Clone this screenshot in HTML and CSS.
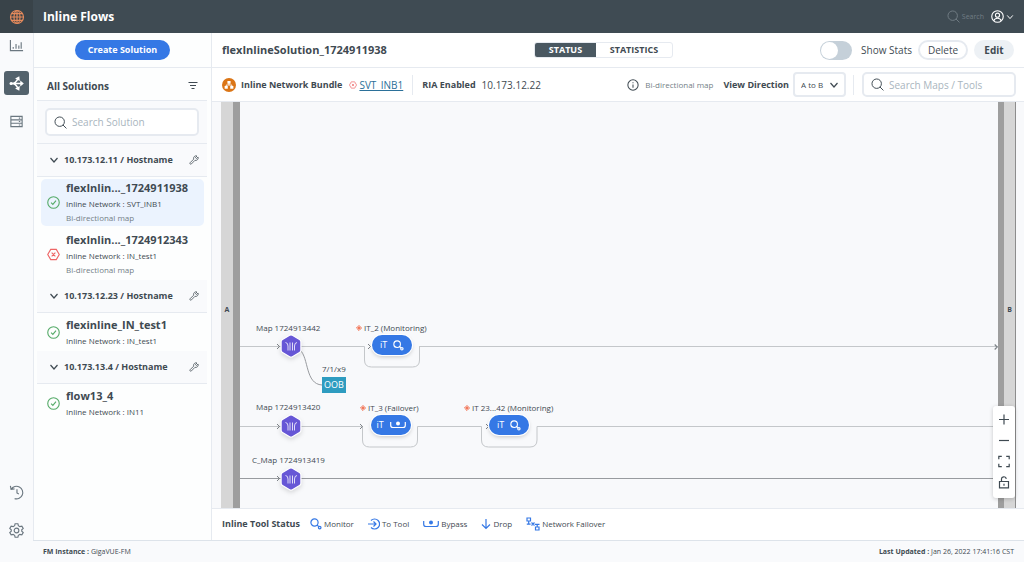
FILE: index.html
```html
<!DOCTYPE html>
<html lang="en">
<head>
<meta charset="UTF-8" />
<meta name="viewport" content="width=device-width, initial-scale=1" />
<title>Inline Flows</title>
<link rel="stylesheet" href="styles.css">
</head>
<body>
<!-- shared icons -->
<svg class="sprite" aria-hidden="true">
  <symbol id="i-search" viewBox="0 0 16 16"><circle cx="7" cy="7" r="5.8"/><path d="M11 11l4.300 4.300"/></symbol>
  <symbol id="i-chevron" viewBox="0 0 10 10"><path d="M1.500 3l3.500 4 3.500-4"/></symbol>
  <symbol id="i-wrench" viewBox="0 0 16 16"><path d="M12.800 1.600a4 4 0 0 0-5.300 5L1.800 12.300a1.400 1.400 0 0 0 2 2l5.700-5.800a4 4 0 0 0 5-5.200l-2.600 2.300-1.600-1.500z"/></symbol>
  <symbol id="i-ok" viewBox="0 0 14 14"><circle cx="7" cy="7" r="6.200"/><path d="M4.400 7.200l1.900 1.900 3.400-4"/></symbol>
  <symbol id="i-error" viewBox="0 0 14 14"><path d="M4 1.500h6L13.200 7 10 12.500H4L.8 7z"/><path d="M5 5l4 4M9 5l-4 4"/></symbol>
  <symbol id="i-monitor" viewBox="0 0 12 12"><circle cx="4.500" cy="4.500" r="3.600"/><path d="M7 7l1.800 1.600"/><circle cx="9.700" cy="9.600" r="1.300"/></symbol>
  <symbol id="i-bypass" viewBox="0 0 16 10"><path d="M.7 2v3.200a2.300 2.300 0 0 0 2.300 2.300h10a2.300 2.300 0 0 0 2.300-2.300V2"/><circle class="dot" cx="8" cy="3.600" r="2"/></symbol>
  <symbol id="i-hex" viewBox="0 0 22 24"><path class="hex" d="M9.600 1.300q1.400-.8 2.800 0l7.100 4.100q1.400.8 1.400 2.400v8.400q0 1.600-1.400 2.400l-7.100 4.100q-1.400.8-2.800 0L2.500 18.600q-1.400-.8-1.400-2.400V7.800q0-1.600 1.400-2.400z"/><path class="mark" d="M5.500 8.500q2.500.3 2.500 3.500v4.500M10 8.500v8M12.500 8.500v8M17 8.500q-2.500.3-2.500 3.500v4.500"/></symbol>
  <symbol id="i-flag" viewBox="0 0 8 8"><path d="M4 .7L7.300 4 4 7.300.7 4z"/><path d="M2.800 2.800l2.400 2.400M5.200 2.800L2.800 5.200"/></symbol>
</svg>

<div class="app">
  <header class="topbar">
    <a class="brand" href="#" aria-label="Home">
      <svg viewBox="0 0 16 16"><circle cx="8" cy="8" r="6.500"/><ellipse cx="8" cy="8" rx="3" ry="6.500"/><path d="M8 1.500v13M1.500 8h13M2.600 4.700h10.800M2.600 11.300h10.800"/></svg>
    </a>
    <h1>Inline Flows</h1>
    <button class="top-search"><svg><use href="#i-search"/></svg>Search</button>
    <button class="account" aria-label="Account">
      <svg class="avatar" viewBox="0 0 14 14"><circle cx="7" cy="7" r="6.200"/><circle cx="7" cy="5.600" r="2.200"/><path d="M3 11.500q1-2.600 4-2.600t4 2.600"/></svg>
      <svg class="chev"><use href="#i-chevron"/></svg>
    </button>
  </header>

  <nav class="rail" aria-label="Main">
    <a href="#" aria-label="Dashboard"><svg viewBox="0 0 16 16"><path d="M1.500 2v11.500H15M4.500 9.500v2M7.500 6.500v5M10.500 8v3.500M13 4.500v7"/></svg></a>
    <a href="#" class="active" aria-label="Inline Flows"><svg viewBox="0 0 16 16"><path class="thick" d="M1 8h12.500M3 8q4 0 6.500-5M3 8q4 0 6.500 5"/><path class="fill" d="M12 4.800L15.800 8 12 11.200zM6.500 2.600L11 .3l.5 5zM6.500 13.400l4.500 2.300.5-5z"/><circle class="fill" cx="2.300" cy="8" r="1.700"/></svg></a>
    <a href="#" aria-label="Inventory"><svg viewBox="0 0 16 16"><path d="M2 2.500h12v11H2zM2 6.200h12M2 9.800h12M10.500 4.400H12M10.500 8H12M10.500 11.700H12"/></svg></a>
    <a href="#" class="history" aria-label="History"><svg viewBox="0 0 16 16"><path d="M2.300 4.500A6.700 6.700 0 1 1 6 14.500M1.500 1l.7 3.700 3.700-.6M8.500 4.500v4l2 1"/></svg></a>
    <a href="#" aria-label="Settings"><svg viewBox="0 0 16 16"><path d="M6.500.8h3l.5 2.100 1.600 1 2.100-.6 1.500 2.500-1.600 1.500v1.400l1.600 1.500-1.500 2.500-2.100-.6-1.600 1-.5 2.100h-3L6 13.100l-1.600-1-2.100.6-1.500-2.500 1.600-1.500V7.300L.8 5.800l1.500-2.500 2.100.6L6 2.900z"/><circle cx="8" cy="8" r="2.500"/></svg></a>
  </nav>

  <aside class="sidebar">
    <div class="create"><button class="primary">Create Solution</button></div>
    <div class="list">
      <div class="list-head">
        <h2>All Solutions</h2>
        <button aria-label="Filter"><svg viewBox="0 0 10 10"><path d="M.5 1.500h9M2 4.500h6M3.500 7.500h3"/></svg></button>
      </div>
      <div class="search-row">
        <label class="field"><svg><use href="#i-search"/></svg><input type="text" placeholder="Search Solution" aria-label="Search Solution"></label>
      </div>

      <h3 class="group"><svg class="chev"><use href="#i-chevron"/></svg>10.173.12.11 / Hostname<svg class="wrench"><use href="#i-wrench"/></svg></h3>
      <a href="#" class="item selected">
        <svg class="ok"><use href="#i-ok"/></svg>
        <span><b>flexInlin..._1724911938</b><small>Inline Network : SVT_INB1</small><small class="muted">Bi-directional map</small></span>
      </a>
      <a href="#" class="item">
        <svg class="error"><use href="#i-error"/></svg>
        <span><b>flexInlin..._1724912343</b><small>Inline Network : IN_test1</small><small class="muted">Bi-directional map</small></span>
      </a>

      <h3 class="group"><svg class="chev"><use href="#i-chevron"/></svg>10.173.12.23 / Hostname<svg class="wrench"><use href="#i-wrench"/></svg></h3>
      <a href="#" class="item">
        <svg class="ok"><use href="#i-ok"/></svg>
        <span><b>flexinline_IN_test1</b><small>Inline Network : IN_test1</small></span>
      </a>

      <h3 class="group"><svg class="chev"><use href="#i-chevron"/></svg>10.173.13.4 / Hostname<svg class="wrench"><use href="#i-wrench"/></svg></h3>
      <a href="#" class="item">
        <svg class="ok"><use href="#i-ok"/></svg>
        <span><b>flow13_4</b><small>Inline Network : IN11</small></span>
      </a>
    </div>
  </aside>

  <main class="main">
    <div class="titlebar">
      <h2>flexInlineSolution_1724911938</h2>
      <div class="tabs" role="tablist">
        <button class="active" role="tab" aria-selected="true">STATUS</button>
        <button role="tab" aria-selected="false">STATISTICS</button>
      </div>
      <div class="actions">
        <input type="checkbox" class="switch" id="showStats">
        <label for="showStats">Show Stats</label>
        <button class="pill outline">Delete</button>
        <button class="pill">Edit</button>
      </div>
    </div>

    <div class="infobar">
      <svg class="bundle" viewBox="0 0 16 16"><circle cx="8" cy="8" r="8"/><path class="white" d="M6.200 3.300h3.600v3.200H6.200zM3 9h3.600v3.200H3zM9.400 9H13v3.200H9.400z"/><path class="link" d="M8 6v2M4.800 9.500V8h6.400v1.500"/></svg>
      <b>Inline Network Bundle</b>
      <svg class="bundle-error"><use href="#i-error"/></svg>
      <a href="#">SVT_INB1</a>
      <i class="sep"></i>
      <b>RIA Enabled</b>
      <span class="ip">10.173.12.22</span>
      <svg class="info" viewBox="0 0 14 14"><circle cx="7" cy="7" r="6"/><path d="M7 6.300v4M7 3.800v1.300"/></svg>
      <span class="hint">Bi-directional map</span>
      <label class="direction" for="direction">View Direction</label>
      <span class="select">
        <select id="direction"><option>A to B</option><option>B to A</option></select>
        <svg class="chev"><use href="#i-chevron"/></svg>
      </span>
      <i class="sep short"></i>
      <label class="field"><svg><use href="#i-search"/></svg><input type="text" placeholder="Search Maps / Tools" aria-label="Search Maps / Tools"></label>
    </div>

    <div class="canvas">
      <div class="port port-a">A</div>
      <div class="stage">
        <svg class="wires" aria-hidden="true">
          <!-- map 1 -->
          <path d="M0 244.500H124.500V258q0 7 7 7H172.500q7 0 7-7V244.500"/>
          <line x1="179" y1="244.500" x2="100%" y2="244.500"/>
          <path class="dark" d="M60 248C69 256 65 282 82 283"/>
          <!-- map 2 -->
          <path d="M0 324.500H122.500V338q0 7 7 7H170.500q7 0 7-7V324.500H241.500V338q0 7 7 7H290q7 0 7-7V324.500"/>
          <line x1="297" y1="324.500" x2="100%" y2="324.500"/>
          <!-- map 3 -->
          <line class="dark" x1="0" y1="376.500" x2="100%" y2="376.500"/>
          <path class="arrow" d="M37 242l2.500 2.500L37 247M128 242l2.500 2.500L128 247M37 322l2.500 2.500L37 327M120 322l2.500 2.500L120 327M246 322l2.500 2.500L246 327M37 374l2.500 2.500L37 379"/>
        </svg>

        <span class="label map1">Map 1724913442</span>
        <svg class="hexnode map1-hex"><use href="#i-hex"/></svg>
        <span class="label oob-label">7/1/x9</span>
        <button class="oob">OOB</button>
        <span class="label tool1-label"><svg><use href="#i-flag"/></svg>IT_2 (Monitoring)</span>
        <button class="tool tool1">iT <svg><use href="#i-monitor"/></svg></button>
        <svg class="end" viewBox="0 0 4 6"><path d="M.7.500L3.200 3 .7 5.500"/></svg>

        <span class="label map2">Map 1724913420</span>
        <svg class="hexnode map2-hex"><use href="#i-hex"/></svg>
        <span class="label tool2-label"><svg><use href="#i-flag"/></svg>IT_3 (Failover)</span>
        <button class="tool tool2">iT <svg class="wide"><use href="#i-bypass"/></svg></button>
        <span class="label tool3-label"><svg><use href="#i-flag"/></svg>IT 23...42 (Monitoring)</span>
        <button class="tool tool3">iT <svg><use href="#i-monitor"/></svg></button>

        <span class="label map3">C_Map 1724913419</span>
        <svg class="hexnode map3-hex"><use href="#i-hex"/></svg>
      </div>
      <div class="port port-b">B</div>

      <div class="zoom">
        <button aria-label="Zoom in"><svg viewBox="0 0 12 12"><path d="M6 1v10M1 6h10"/></svg></button>
        <button aria-label="Zoom out"><svg viewBox="0 0 12 12"><path d="M1 6h10"/></svg></button>
        <button aria-label="Fit view"><svg viewBox="0 0 12 12"><path d="M.8 3.800v-3h3M8.200.8h3v3M11.200 8.200v3h-3M3.800 11.200h-3v-3"/></svg></button>
        <button aria-label="Unlock"><svg viewBox="0 0 12 12"><path d="M1.500 5h9v6.300h-9zM3.500 5V3a2.400 2.400 0 0 1 4.800-.6M6 7.200v2"/></svg></button>
      </div>
    </div>

    <div class="legend">
      <b>Inline Tool Status</b>
      <span><svg><use href="#i-monitor"/></svg>Monitor</span>
      <span><svg viewBox="0 0 12 12"><path d="M3 2.500a5 5 0 1 1 0 7M0 6h8M5.500 3.500L8 6 5.500 8.500"/></svg>To Tool</span>
      <span><svg class="wide"><use href="#i-bypass"/></svg>Bypass</span>
      <span><svg class="slim" viewBox="0 0 10 12"><path d="M5 1v9.500M1 6.500l4 4 4-4"/></svg>Drop</span>
      <span><svg class="failover" viewBox="0 0 14 14"><path d="M1 1h3.500v3H1zM2.700 4v3M.8 7.200h3.800M9.500 10H13v3H9.500zM11.200 7.500V10M9 7.300h4.500M5.500 5.500l3 3M8.500 5.500l-3 3"/></svg>Network Failover</span>
    </div>
  </main>

  <footer class="footer">
    <span><b>FM Instance :</b> GigaVUE-FM</span>
    <span><b>Last Updated :</b> Jan 26, 2022 17:41:16 CST</span>
  </footer>
</div>
</body>
</html>
```
FILE: styles.css
```css
*, *::before, *::after {
  box-sizing: border-box;
}
body {
  --ink: #3f4a52;
  --line: #e6eaf0;
  --soft: #f9fafc;
  --blue: #3578e5;
  margin: 0;
  font-family: "Open Sans", "Noto Sans", sans-serif;
  font-size: 9px;
  line-height: 12px;
  color: var(--ink);
  background: var(--soft);
}
h1, h2, h3 {
  margin: 0;
}
button, input, select {
  font: inherit;
  color: inherit;
  border: 0;
  padding: 0;
  background: none;
}
button {
  cursor: pointer;
}
a {
  color: inherit;
  text-decoration: none;
}
svg {
  display: block;
  flex: none;
  fill: none;
  stroke: currentColor;
  stroke-width: 1.2;
}
.sprite {
  position: absolute;
  width: 0;
  height: 0;
}
.chev {
  width: 10px;
  height: 10px;
}

/* page frame */
.app {
  display: grid;
  grid-template: 33px 1fr 22px / 33px 179px 1fr;
  height: 100vh;
}

/* top bar */
.topbar {
  grid-column: 1 / -1;
  display: flex;
  align-items: center;
  padding-right: 10px;
  background: #3f4b53;
  color: #fff;
}
.brand {
  display: grid;
  place-items: center;
  width: 33px;
  height: 33px;
  background: #394349;
  color: #e58a5c;
}
.brand svg {
  width: 16px;
  height: 16px;
}
.topbar h1 {
  margin-left: 10px;
  font-size: 12px;
}
.top-search {
  display: flex;
  align-items: center;
  gap: 2px;
  margin-left: auto;
  font-size: 7px;
  color: #717c84;
}
.top-search svg {
  width: 13px;
  height: 13px;
}
.account {
  display: flex;
  align-items: center;
  gap: 2px;
  margin-left: 7px;
}
.avatar {
  width: 13px;
  height: 13px;
}
.account .chev {
  width: 8px;
  height: 8px;
}

/* icon rail */
.rail {
  grid-row: 2 / 4;
  display: flex;
  flex-direction: column;
  align-items: center;
  gap: 14px;
  padding-bottom: 20px;
  color: #6b7780;
}
.rail a {
  display: grid;
  place-items: center;
  width: 25px;
  height: 24px;
  border-radius: 3px;
}
.rail svg {
  width: 15px;
  height: 15px;
}
.rail .active {
  background: #53626c;
  color: #fff;
}
.rail .thick {
  stroke-width: 1.6;
}
.rail .fill {
  fill: currentColor;
  stroke: none;
}
.rail .history {
  margin-top: auto;
}

/* sidebar */
.sidebar {
  background: #fdfefe;
  border: solid var(--line);
  border-width: 0 1px;
}
.create {
  display: grid;
  place-items: center;
  height: 35px;
  border-bottom: 1px solid var(--line);
}
.primary {
  width: 95px;
  height: 20px;
  border-radius: 10px;
  background: var(--blue);
  color: #fff;
  font-weight: 700;
}
.list {
  padding: 0 4px 0 3px;
}
.list-head {
  display: flex;
  align-items: center;
  justify-content: space-between;
  height: 33px;
  padding: 4px 9px 0 10px;
  border-bottom: 1px solid var(--line);
}
.list-head h2 {
  font-size: 10px;
}
.list-head svg {
  width: 10px;
  height: 10px;
}
.search-row {
  padding: 7px 8px;
  background: var(--soft);
  border-bottom: 1px solid var(--line);
}
.field {
  display: flex;
  align-items: center;
  gap: 5px;
  height: 28px;
  padding: 0 7px;
  background: #fff;
  border: 2px solid var(--line);
  border-radius: 5px;
}
.field svg {
  width: 13px;
  height: 13px;
}
.field input {
  flex: 1;
  min-width: 0;
  font-size: 10px;
  outline: none;
}
.field input::placeholder {
  color: #a9b5be;
}
.group {
  display: flex;
  align-items: center;
  gap: 5px;
  height: 33px;
  padding: 0 8px 0 12px;
  font-size: 9px;
  background: var(--soft);
  border-bottom: 1px solid var(--line);
}
.wrench {
  width: 10px;
  height: 10px;
  margin-left: auto;
}
.item {
  display: flex;
  align-items: center;
  gap: 6px;
  margin: 0 4px;
  padding: 3px 6px;
  border-radius: 5px;
}
.item.selected {
  margin: 2px 3px 2px 4px;
  padding: 0 6px 1px;
  background: #ebf3fe;
}
.item svg {
  width: 13px;
  height: 13px;
}
.item b, .item small {
  display: block;
}
.item b {
  font-size: 11px;
  line-height: 18px;
}
.item small {
  font-size: 8px;
  line-height: 14px;
}
.item .muted {
  color: #747f87;
}
.ok {
  color: #56ab69;
}
.error, .bundle-error {
  color: #ee6666;
}

/* title bar */
.main {
  display: flex;
  flex-direction: column;
  min-width: 0;
  background: #fff;
}
.titlebar {
  display: flex;
  justify-content: space-between;
  align-items: center;
  height: 35px;
  padding: 0 10px;
  border-bottom: 1px solid var(--line);
}
.titlebar h2 {
  font-size: 11px;
}
.tabs {
  display: flex;
  height: 16px;
  border: 1px solid var(--line);
  border-radius: 3px;
  overflow: hidden;
}
.tabs button {
  width: 76px;
  line-height: 14px;
  font-weight: 700;
}
.tabs .active {
  width: 61px;
  background: #4a5861;
  color: #fff;
}
.actions {
  display: flex;
  align-items: center;
  gap: 6px;
}
.actions label {
  font-size: 10px;
}
.switch {
  appearance: none;
  width: 32px;
  height: 19px;
  margin: 0 3px 0 0;
  padding: 1px;
  border-radius: 10px;
  background: #c5d0d9;
}
.switch::before {
  content: "";
  display: block;
  width: 17px;
  height: 17px;
  border-radius: 50%;
  background: #fff;
}
.switch:checked::before {
  margin-left: auto;
}
.pill {
  width: 40px;
  height: 20px;
  border-radius: 10px;
  background: #edf1f5;
  font-size: 10px;
  font-weight: 700;
}
.pill.outline {
  width: 50px;
  background: #fff;
  border: 2px solid var(--line);
  font-weight: 400;
}

/* info bar */
.infobar {
  display: flex;
  align-items: center;
  height: 34px;
  padding: 0 8px 0 10px;
  border-bottom: 1px solid var(--line);
}
.bundle {
  width: 14px;
  height: 14px;
  margin-right: 5px;
}
.bundle circle {
  fill: #db7516;
  stroke: none;
}
.bundle .white {
  fill: #fff;
  stroke: none;
}
.bundle .link {
  stroke: #fff;
  stroke-width: 1;
}
.bundle-error {
  width: 8px;
  height: 8px;
  margin: 0 2px 0 7px;
}
.infobar a {
  font-size: 10px;
  color: #2b7099;
  text-decoration: underline;
}
.sep {
  height: 20px;
  margin: 0 9px;
  border-left: 1px solid var(--line);
}
.ip {
  margin-left: 6px;
  font-size: 10px;
}
.info {
  width: 12px;
  height: 12px;
  margin: 0 6px 0 auto;
}
.hint {
  font-size: 8px;
  color: #747f87;
}
.direction {
  margin: 0 4px 0 10px;
  font-weight: 700;
}
.select {
  position: relative;
}
.select select {
  appearance: none;
  display: block;
  width: 53px;
  height: 25px;
  padding: 0 6px;
  font-size: 8px;
  background: #fff;
  border: 2px solid var(--line);
  border-radius: 4px;
}
.select .chev {
  position: absolute;
  top: 8px;
  right: 7px;
  pointer-events: none;
}
.sep.short {
  margin: 0 8px 0 7px;
}
.infobar .field {
  flex: 0 0 154px;
  min-width: 0;
  width: 154px;
  height: 25px;
}
.field input {
  width: 100%;
}

/* flow canvas */
.canvas {
  position: relative;
  flex: 1;
  display: flex;
  min-height: 0;
  padding: 0 8px 0 9px;
  background: #f8f9fb;
  border-bottom: 1px solid var(--line);
}
.port {
  display: grid;
  place-items: center;
  padding-top: 10px;
  width: 19px;
  font-size: 7px;
  font-weight: 700;
  background: #d6d6d6;
}
.port-a {
  border-right: 7px solid #9e9e9e;
}
.port-b {
  width: 18px;
  border-left: 6px solid #9e9e9e;
  border-right: 1px solid #8d8d8d;
}
.stage {
  position: relative;
  flex: 1;
}
.wires {
  width: 100%;
  height: 100%;
  stroke: #c4c7ca;
  stroke-width: 1;
}
.wires .dark {
  stroke: #989b9f;
}
.wires .arrow, .end {
  stroke: #7e8388;
}
.end {
  position: absolute;
  top: 242px;
  right: 0;
  width: 4px;
  height: 6px;
}
.label {
  position: absolute;
  display: flex;
  align-items: center;
  gap: 2px;
  font-size: 8px;
  white-space: nowrap;
}
.label svg {
  width: 6px;
  height: 6px;
  color: #f05a35;
}
.hexnode {
  position: absolute;
  left: 40px;
  width: 22px;
  height: 24px;
  filter: drop-shadow(0 2px 2px #0002);
}
.hex {
  fill: #6757d6;
  stroke: #fff;
}
.mark {
  stroke: #fff;
  stroke-width: .8;
}
.tool {
  position: absolute;
  display: flex;
  align-items: center;
  justify-content: center;
  gap: 6px;
  width: 40px;
  height: 20px;
  border-radius: 10px;
  background: var(--blue);
  color: #fff;
  box-shadow: 0 0 0 1px #fff, 0 2px 4px #0003;
}
.tool svg {
  width: 11px;
  height: 11px;
}
.tool .wide, .legend .wide {
  width: 16px;
  height: 10px;
}
.dot {
  fill: currentColor;
  stroke: none;
}
.oob {
  position: absolute;
  top: 275px;
  left: 82px;
  width: 24px;
  height: 16px;
  background: #2e9cc0;
  color: #fff;
  line-height: 16px;
}

/* node positions on the canvas */
.map1 { top: 220px; left: 16px; }
.map1-hex { top: 232px; }
.oob-label { top: 261px; left: 82px; }
.tool1-label { top: 220px; left: 116px; }
.tool1 { top: 233px; left: 132px; }
.map2 { top: 299px; left: 16px; }
.map2-hex { top: 312px; }
.tool2-label { top: 300px; left: 120px; }
.tool2 { top: 313px; left: 131px; }
.tool3-label { top: 300px; left: 224px; }
.tool3 { top: 313px; left: 249px; }
.map3 { top: 352px; left: 12px; }
.map3-hex { top: 365px; }

/* zoom controls */
.zoom {
  position: absolute;
  right: 9px;
  bottom: 10px;
  display: flex;
  flex-direction: column;
  gap: 8px;
  align-items: center;
  width: 22px;
  height: 92px;
  padding: 7px 0;
  border-radius: 3px;
  background: #fff;
  box-shadow: 0 1px 4px #0003;
}
.zoom svg {
  width: 12px;
  height: 13px;
}

/* legend */
.legend {
  display: flex;
  align-items: center;
  gap: 14px;
  height: 31px;
  padding: 0 10px 2px;
  font-size: 8px;
}
.legend b {
  font-size: 9px;
  margin-right: -4px;
}
.legend span {
  display: flex;
  align-items: center;
  gap: 2px;
}
.legend svg {
  width: 12px;
  height: 12px;
  color: var(--blue);
}
.legend .slim {
  width: 10px;
}
.legend .failover {
  width: 14px;
  height: 14px;
}

/* footer */
.footer {
  grid-column: 2 / -1;
  display: flex;
  align-items: center;
  justify-content: space-between;
  padding: 0 10px;
  font-size: 7px;
  background: var(--soft);
  border-top: 1px solid #dde3ea;
}
```
